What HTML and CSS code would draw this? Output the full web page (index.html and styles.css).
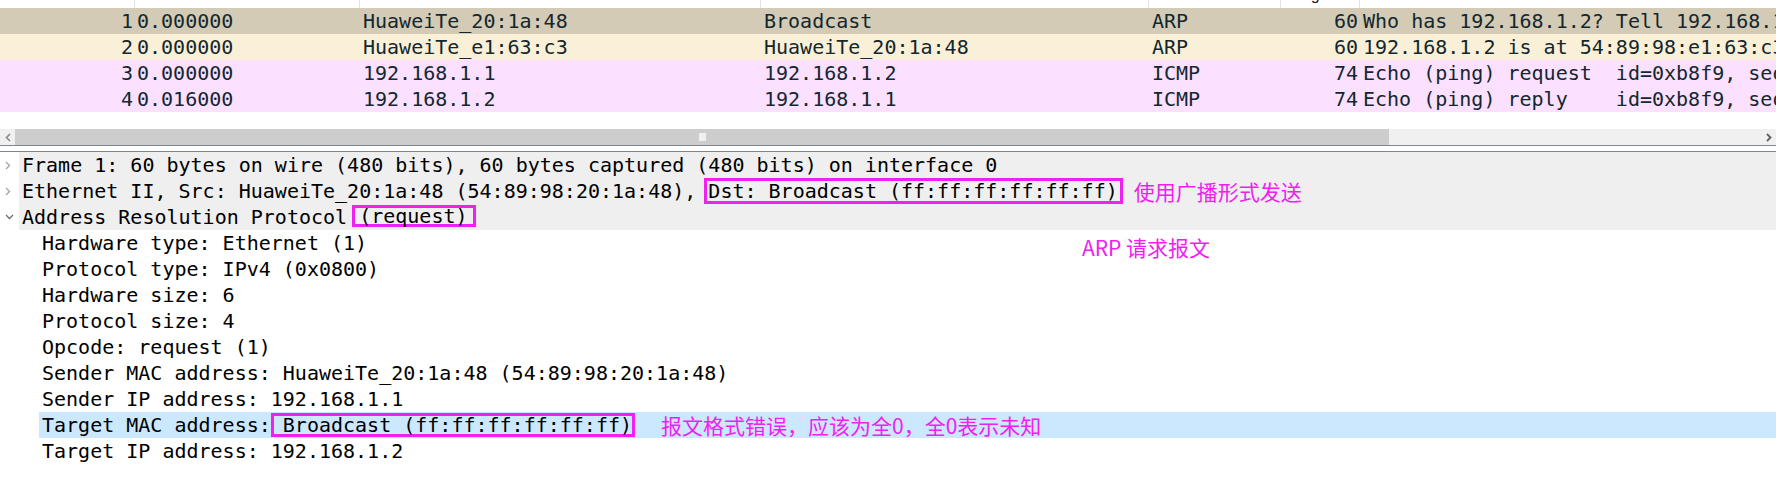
FILE: index.html
```html
<!DOCTYPE html>
<html lang="zh-CN">
<head>
<meta charset="utf-8">
<title>Wireshark ARP</title>
<link rel="stylesheet" href="styles.css">
</head>
<body>
<div class="app">
  <div class="plist">
    <div class="phead">
      <div class="hcell"><span>No.</span></div>
      <div class="hcell"><span>Time</span></div>
      <div class="hcell"><span>Source</span></div>
      <div class="hcell"><span>Destination</span></div>
      <div class="hcell"><span>Protocol</span></div>
      <div class="hcell"><span>Length</span></div>
      <div class="hcell"><span>Info</span></div>
    </div>
    <div class="prow arp-sel">
      <div class="c num">1</div><div class="c">0.000000</div><div class="c addr">HuaweiTe_20:1a:48</div><div class="c addr">Broadcast</div><div class="c addr">ARP</div><div class="c num">60</div><div class="c info">Who has 192.168.1.2? Tell 192.168.1.1</div>
    </div>
    <div class="prow arp">
      <div class="c num">2</div><div class="c">0.000000</div><div class="c addr">HuaweiTe_e1:63:c3</div><div class="c addr">HuaweiTe_20:1a:48</div><div class="c addr">ARP</div><div class="c num">60</div><div class="c info">192.168.1.2 is at 54:89:98:e1:63:c3</div>
    </div>
    <div class="prow icmp">
      <div class="c num">3</div><div class="c">0.000000</div><div class="c addr">192.168.1.1</div><div class="c addr">192.168.1.2</div><div class="c addr">ICMP</div><div class="c num">74</div><div class="c info">Echo (ping) request  id=0xb8f9, seq=1/256, ttl=64 (reply in 4)</div>
    </div>
    <div class="prow icmp">
      <div class="c num">4</div><div class="c">0.016000</div><div class="c addr">192.168.1.2</div><div class="c addr">192.168.1.1</div><div class="c addr">ICMP</div><div class="c num">74</div><div class="c info">Echo (ping) reply    id=0xb8f9, seq=1/256, ttl=64 (request in 3)</div>
    </div>
  </div>

  <div class="hscroll">
    <div class="sarrow"><svg width="6" height="9" viewBox="0 0 6 9"><path d="M5 1L1.5 4.5L5 8" fill="none" stroke="#8a8a8a" stroke-width="1.6"/></svg></div>
    <div class="thumb"><div class="grip"></div></div>
    <div class="track"></div>
    <div class="sarrow"><svg width="6" height="9" viewBox="0 0 6 9"><path d="M1 1L4.5 4.5L1 8" fill="none" stroke="#5f5f5f" stroke-width="1.8"/></svg></div>
  </div>

  <div class="split"></div>

  <div class="tree">
    <div class="tnode top">
      <span class="tw"><svg width="6" height="9" viewBox="0 0 6 9"><path d="M1 1L4.5 4.5L1 8" fill="none" stroke="#a3a3a3" stroke-width="1.3"/></svg></span>
      <span class="tl">Frame 1: 60 bytes on wire (480 bits), 60 bytes captured (480 bits) on interface 0</span>
    </div>
    <div class="tnode top">
      <span class="tw"><svg width="6" height="9" viewBox="0 0 6 9"><path d="M1 1L4.5 4.5L1 8" fill="none" stroke="#a3a3a3" stroke-width="1.3"/></svg></span>
      <span class="tl">Ethernet II, Src: HuaweiTe_20:1a:48 (54:89:98:20:1a:48), <span class="mark mark-dst">Dst: Broadcast (ff:ff:ff:ff:ff:ff)</span><span class="note note-eth">使用广播形式发送</span></span>
    </div>
    <div class="tnode top">
      <span class="tw"><svg width="9" height="6" viewBox="0 0 9 6"><path d="M1 1L4.5 4.5L8 1" fill="none" stroke="#6e6e6e" stroke-width="1.3"/></svg></span>
      <span class="tl">Address Resolution Protocol <span class="mark mark-req">(request)</span></span>
    </div>
    <div class="tnode child"><span class="tl">Hardware type: Ethernet (1)</span></div>
    <div class="tnode child"><span class="tl">Protocol type: IPv4 (0x0800)</span></div>
    <div class="tnode child"><span class="tl">Hardware size: 6</span></div>
    <div class="tnode child"><span class="tl">Protocol size: 4</span></div>
    <div class="tnode child"><span class="tl">Opcode: request (1)</span></div>
    <div class="tnode child"><span class="tl">Sender MAC address: HuaweiTe_20:1a:48 (54:89:98:20:1a:48)</span></div>
    <div class="tnode child"><span class="tl">Sender IP address: 192.168.1.1</span></div>
    <div class="tnode child sel"><span class="tl">Target MAC address: <span class="mark mark-mac">Broadcast (ff:ff:ff:ff:ff:ff)</span><span class="note note-mac">报文格式错误，应该为全0，全0表示未知</span></span></div>
    <div class="tnode child"><span class="tl">Target IP address: 192.168.1.2</span></div>

    <div class="note note-arp">ARP 请求报文</div>
  </div>
</div>
</body>
</html>
```

FILE: styles.css
```css
* {
  box-sizing: border-box;
}

html,
body {
  margin: 0;
  padding: 0;
  background: #ffffff;
}

body {
  width: 1776px;
  height: 484px;
  overflow: hidden;
  font-family: "DejaVu Sans Mono", "Liberation Mono", monospace;
  font-size: 20px;
  color: #000000;
}

.app {
  display: flex;
  flex-direction: column;
}

/* ---------- packet list ---------- */
.plist {
  height: 129px;
}

.phead,
.prow {
  display: grid;
  grid-template-columns: 134px 225px 401px 388px 132px 79px 1fr;
}

.phead {
  height: 8px;
  overflow: hidden;
}

.hcell {
  border-left: 1px solid #e2e2e2;
  padding-left: 3px;
  overflow: hidden;
  font-family: "Liberation Sans", "DejaVu Sans", sans-serif;
  font-size: 16px;
  line-height: 18px;
  color: #222222;
}

.hcell:first-child {
  border-left: 0;
}

.hcell span {
  display: block;
  margin-top: -14px;
}

.prow {
  height: 26px;
  align-items: center;
  color: #12272e;
  white-space: pre;
}

.prow .c {
  overflow: hidden;
  padding-left: 3px;
}

.prow .addr {
  padding-left: 4px;
}

.prow .num {
  text-align: right;
  padding-left: 0;
  padding-right: 1px;
}

.prow .info {
  padding-left: 4px;
}

.arp-sel {
  background: #d4cbb6;
}

.arp {
  background: #faf0d7;
}

.icmp {
  background: #fce0ff;
}

/* ---------- horizontal scrollbar ---------- */
.hscroll {
  display: grid;
  grid-template-columns: 15px 1374px 1fr 15px;
  height: 16px;
  background: #f0f0f0;
}

.sarrow {
  display: flex;
  align-items: center;
  justify-content: center;
}

.thumb {
  background: #cdcdcd;
  display: flex;
  align-items: center;
  justify-content: center;
}

.grip {
  width: 7px;
  height: 8px;
  background: #f0f0f0;
}

.split {
  height: 7px;
  border-top: 1px solid #80868d;
  border-bottom: 1px solid #80868d;
}

/* ---------- detail tree ---------- */
.tree {
  position: relative;
}

.tnode {
  display: flex;
  height: 26px;
}

.tw {
  width: 19px;
  flex: none;
  display: flex;
  align-items: center;
  padding-left: 5px;
}

.tl {
  flex: 1;
  display: flex;
  align-items: center;
  padding-left: 3px;
  white-space: pre;
}

.top .tl {
  background: #efefef;
}

.child {
  padding-left: 39px;
}

.sel .tl {
  background: #cce8ff;
}

.mark {
  display: flex;
  align-items: center;
  height: 24px;
  border: 3px solid #f020f0;
}

.mark-dst {
  height: 26px;
  margin-left: -4px;
  padding-left: 1px;
  padding-right: 2px;
}

.mark-req {
  height: 22px;
  margin-top: -2px;
  margin-left: -7px;
  padding-left: 4px;
  padding-right: 5px;
}

.mark-mac {
  margin-left: -12px;
  padding-left: 9px;
  padding-right: 0;
}

.note {
  font-family: "Noto Sans CJK SC", "Noto Sans", sans-serif;
  font-size: 21px;
  line-height: 26px;
  color: #f020f0;
  white-space: pre;
}

.note-eth {
  margin-left: 11px;
}

.note-mac {
  margin-left: 26px;
}

.note-arp {
  position: absolute;
  left: 1082px;
  top: 82px;
}
```
